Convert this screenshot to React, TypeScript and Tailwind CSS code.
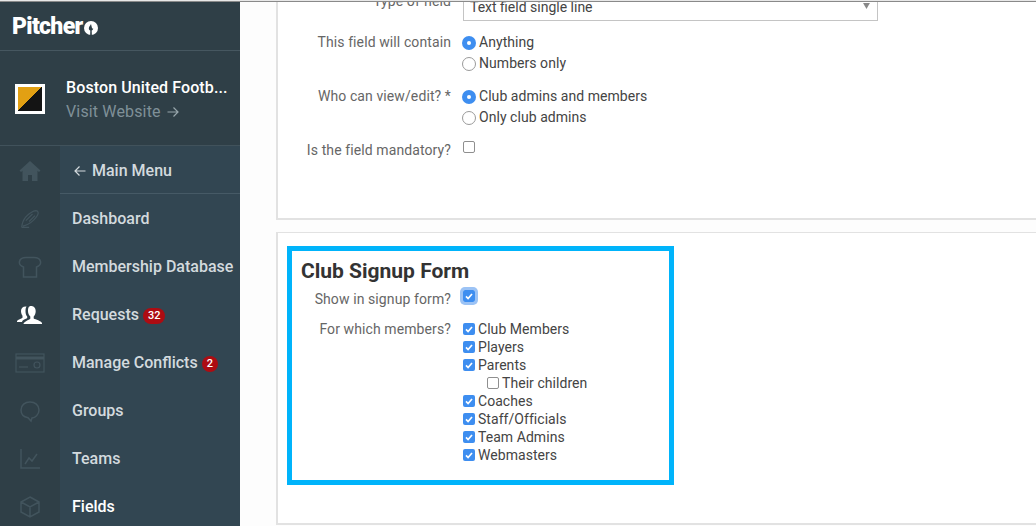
import React from "react";

const Check = () => (
  <span className="flex h-3 w-3 shrink-0 items-center justify-center rounded-[2px] bg-[#3e8ef0]">
    <svg viewBox="0 0 12 12" className="h-3 w-3" fill="none" stroke="#fff" strokeWidth="1.7">
      <path d="M3 6.300l2.100 2.200L9 4" />
    </svg>
  </span>
);
const Empty = () => <span className="block h-3 w-3 shrink-0 rounded-[2px] border border-[#8f8f8f] bg-white" />;
const Radio = ({ on }: { on?: boolean }) =>
  on ? (
    <span className="flex h-[14px] w-[14px] shrink-0 items-center justify-center rounded-full bg-[#3e8ef0]">
      <span className="h-1 w-1 rounded-full bg-white" />
    </span>
  ) : (
    <span className="block h-[14px] w-[14px] shrink-0 rounded-full border border-[#9a9a9a] bg-white" />
  );

const Label = ({ children, className = "" }: { children: React.ReactNode; className?: string }) => (
  <div className={"w-[173px] shrink-0 text-right text-[14px] tracking-[0.1px] text-[#666] " + className}>{children}</div>
);

const RadioOpt = ({ on, text }: { on?: boolean; text: string }) => (
  <div className="flex h-[21px] items-center gap-[3px] text-[14px] tracking-[0.05px] text-[#444]">
    <Radio on={on} />
    <span>{text}</span>
  </div>
);

const CheckOpt = ({ on = true, text, indent }: { on?: boolean; text: string; indent?: boolean }) => (
  <div className={"flex h-[18px] items-center gap-[3px] text-[14px] tracking-[0.05px] text-[#444] " + (indent ? "pl-6" : "")}>
    {on ? <Check /> : <Empty />}
    <span>{text}</span>
  </div>
);

const icon = "h-6 w-6 fill-none stroke-[#42545d] stroke-[1.5]";
const rail: React.ReactNode[] = [
  <svg viewBox="0 0 24 24" className="h-6 w-6 fill-[#42545d]"><path d="M12 2L1.500 11.500 3 13l1.500-1.200V22h5.500v-6h4v6h5.500V11.800L21 13l1.500-1.500z" /></svg>,
  <svg viewBox="0 0 24 24" className="h-5 w-5 fill-none stroke-[#42545d] stroke-[1.5]"><path d="M2 22c.5-5 2-9 5-12.500C10.500 6 15 2.500 19 2c3 0 3.500 3 2 5.500-2 3.500-6.500 8-11 10.500-2.500 1.300-5 2-6.500 2.500M2 22h9M7 14l8-8M11 15l7-7" /></svg>,
  <svg viewBox="0 0 24 24" className={icon}><path d="M5.500 22V12C2.500 11 1 9 1.500 6.500 2 4 5 2.500 8 2.500h8c3 0 6 1.500 6.500 4 .5 2.500-1 4.500-4 5.500v10z" /></svg>,
  <svg viewBox="0 0 28 24" className="h-6 w-7 fill-white"><path d="M15 3c3 0 4.700 2.200 4.700 5.200 0 2-.8 4-2 5.200v2c2 1 7.300 2.300 8.300 4.600v1H7.500c0-2 5.500-4.200 6.800-5.200v-2.400c-1.300-1.200-2.300-3.200-2.300-5.200C12 5.200 12.500 3 15 3zM10.500 3.500c-.8 1-1 2.800-1 4.700 0 2 .5 4 1.700 5.300v1.500c-1.500 1.200-4.700 1.800-5.200 4H1v-1c.8-1.500 4.500-2.500 5.500-3.300v-2c-1-1.200-1.500-3-1.500-4.700 0-3 2-4.800 5.500-4.500z" /></svg>,
  <svg viewBox="0 0 30 20" className="h-5 w-[30px] fill-none stroke-[#42545d] stroke-[1.2]"><rect x="1" y="1" width="28" height="18" /><path d="M1 5h28" strokeWidth="3" /><path d="M4 14h9" /><circle cx="22" cy="12" r="3" /></svg>,
  <svg viewBox="0 0 24 24" className={icon}><path d="M12 3c5 0 9 3 9 8s-4 7.500-7 8l-1 3-3-3.300C6 18 3 15.500 3 11c0-5 4-8 9-8z" /></svg>,
  <svg viewBox="0 0 24 24" className={icon}><path d="M3 2v19h19M7 17l4-6 3 3 5-7" /></svg>,
  <svg viewBox="0 0 24 24" className={icon}><path d="M12 2l9 5v10l-9 5-9-5V7zM3 7l9 5 9-5M12 12v10" /></svg>,
];

const Item = ({ text, badge, active }: { text: string; badge?: string; active?: boolean }) => (
  <div className={"flex h-12 items-center pl-3 pt-[2px] text-[16px] font-medium " + (active ? "text-white" : "text-[#d3dade]")}>
    <span>{text}</span>
    {badge && (
      <span className="ml-[4px] mt-[2px] flex h-[16px] min-w-[16px] items-center justify-center rounded-full bg-[#ad0c12] px-[5px] text-[11px] font-medium text-white">
        {badge}
      </span>
    )}
  </div>
);

export default function App() {
  return (
    <div className="flex h-[526px] w-[1036px] flex-col overflow-hidden bg-white font-['Roboto',sans-serif]">
      <div className="h-[2px] shrink-0 border-b border-[#8a8a8a] bg-[#e8e8e8]" />
      <div className="flex min-h-0 flex-1">
        <aside className="flex w-[240px] shrink-0 flex-col bg-[#2f3f47]">
          <div className="flex h-[49px] shrink-0 items-center border-b border-[#465760] pl-3 pt-[1px]">
            <span className="text-[23px] font-black leading-none tracking-[-0.7px] text-white">Pitcher</span>
            <svg viewBox="0 0 16 16" className="ml-[1px] mt-[3px] h-[14px] w-[14px]">
              <circle cx="8" cy="8" r="8" fill="#fff" />
              <path d="M8 3.500c-1 2-2.500 3-2.500 5 0 1.500 1 2 1.700 2.300L7 16h2l-.2-5.200c.8-.3 1.700-1 1.700-2.300-1 .5-1.500 0-1.500-1z" fill="#2f3f47" />
            </svg>
          </div>
          <div className="flex h-[95px] shrink-0 items-center border-b border-[#41525b] pl-[15px] pt-[1px]">
            <div className="h-[30px] w-[30px] shrink-0 border-[3px] border-white bg-[linear-gradient(to_bottom_right,#e2a013_50%,#141414_50%)]" />
            <div className="ml-[21px] mt-[2px] min-w-0">
              <div className="text-[16px] font-medium leading-6 tracking-[0.1px] text-white">Boston United Footb...</div>
              <div className="flex items-center gap-[6px] text-[16px] leading-6 tracking-[0.15px] text-[#7f9098]">
                Visit Website
                <svg viewBox="0 0 12 12" className="h-3 w-3 fill-none stroke-[#98a6ac] stroke-[1.2]"><path d="M0.500 6h10.500M6.500 1.500L11 6l-4.500 4.500" /></svg>
              </div>
            </div>
          </div>
          <div className="flex min-h-0 flex-1">
            <div className="flex w-[60px] shrink-0 flex-col items-center pt-[1px]">
              {rail.map((r, i) => (
                <div key={i} className="flex h-12 shrink-0 items-center justify-center">{r}</div>
              ))}
            </div>
            <div className="flex-1 bg-[#324652]">
              <div className="flex h-[48px] items-center gap-[6px] border-b border-[#465a66] pl-[14px] pt-[2px] text-[16px] font-medium text-[#d3dade]">
                <svg viewBox="0 0 12 12" className="h-3 w-3 fill-none stroke-[#d3dade] stroke-[1.2]"><path d="M11.500 6H1M5.500 1.500L1 6l4.500 4.500" /></svg>
                Main Menu
              </div>
              <Item text="Dashboard" />
              <Item text="Membership Database" />
              <Item text="Requests" badge="32" />
              <Item text="Manage Conflicts" badge="2" />
              <Item text="Groups" />
              <Item text="Teams" />
              <Item text="Fields" active />
            </div>
          </div>
        </aside>
        <main className="min-w-0 flex-1 overflow-hidden bg-[#fdfdfd] pl-9">
          <section className="h-[221px] w-[800px] border-b-2 border-l-2 border-[#e2e2e2] bg-white">
            <div className="-mt-[3px] flex h-[22px] items-end">
              <Label className="pb-[9px]">Type of field</Label>
              <div className="ml-[12px] flex h-[22px] w-[415px] items-center justify-between border-r border-b border-l border-[#c4c4c4] pl-[6px] pr-[7px] text-[14px] leading-none text-[#444]">
                <span className="-mt-[5px]">Text field single line</span>
                <svg viewBox="0 0 8 7" className="-mt-[7px] h-[6px] w-[7px] fill-[#888]"><path d="M0 0h8L4 7z" /></svg>
              </div>
            </div>
            <div className="mt-[11px] flex">
              <Label className="leading-[21px]">This field will contain</Label>
              <div className="ml-[11px]">
                <RadioOpt on text="Anything" />
                <RadioOpt text="Numbers only" />
              </div>
            </div>
            <div className="mt-3 flex">
              <Label className="leading-[21px]">Who can view/edit? *</Label>
              <div className="ml-[11px]">
                <RadioOpt on text="Club admins and members" />
                <RadioOpt text="Only club admins" />
              </div>
            </div>
            <div className="mt-3 flex">
              <Label className="leading-[21px]">Is the field mandatory?</Label>
              <div className="ml-[12px] mt-[1px]"><Empty /></div>
            </div>
          </section>
          <section className="mt-[12px] h-[293px] w-[800px] border-t border-b-2 border-l-2 border-[#e2e2e2] bg-white pl-[9px] pt-[13px]">
            <div className="h-[239px] w-[387px] border-[5px] border-[#00b4fb] pl-[9px] pt-[8px]">
              <h2 className="text-[21px] font-bold leading-6 text-[#333]">Club Signup Form</h2>
              <div className="mt-[6px] flex">
                <div className="w-[150px] shrink-0 text-right text-[14px] leading-[21px] tracking-[0.1px] text-[#666]">Show in signup form?</div>
                <div className="ml-[12px] mt-[1px] h-3 rounded-[2px] shadow-[0_0_0_3px_#9cc3f5]"><Check /></div>
              </div>
              <div className="mt-[10px] flex">
                <div className="w-[150px] shrink-0 text-right text-[14px] leading-[18px] tracking-[0.1px] text-[#666]">For which members?</div>
                <div className="ml-[12px]">
                  <CheckOpt text="Club Members" />
                  <CheckOpt text="Players" />
                  <CheckOpt text="Parents" />
                  <CheckOpt on={false} indent text="Their children" />
                  <CheckOpt text="Coaches" />
                  <CheckOpt text="Staff/Officials" />
                  <CheckOpt text="Team Admins" />
                  <CheckOpt text="Webmasters" />
                </div>
              </div>
            </div>
          </section>
        </main>
      </div>
    </div>
  );
}
